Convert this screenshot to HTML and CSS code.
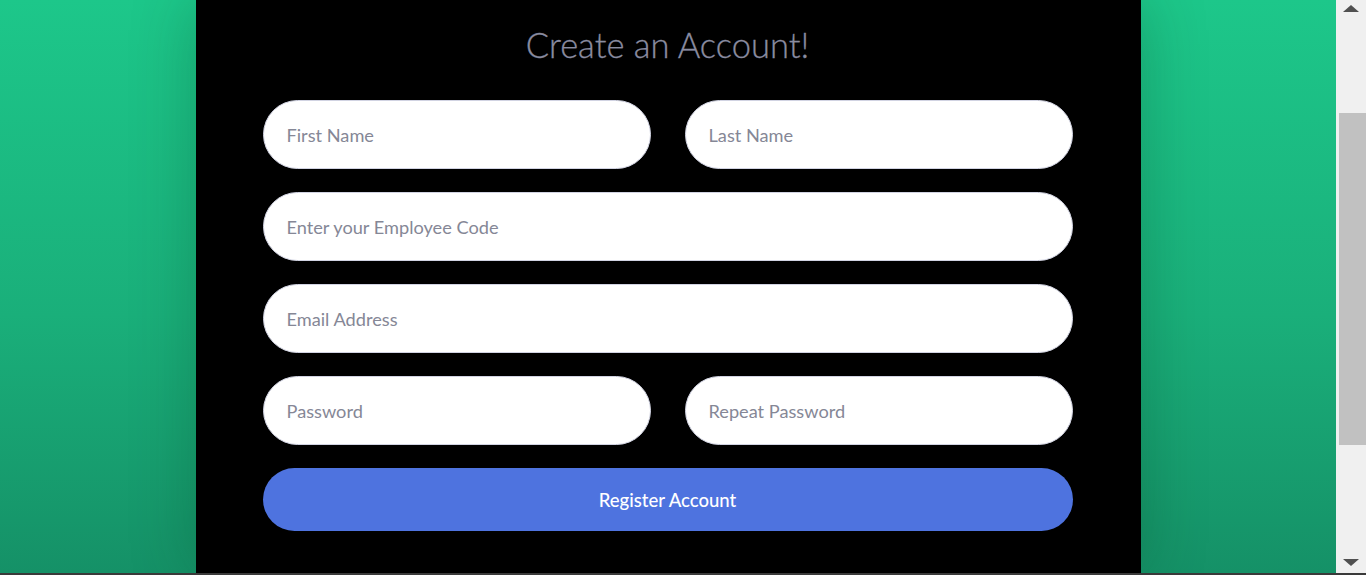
FILE: index.html
```html
<!DOCTYPE html>
<html lang="en">
<head>
<meta charset="utf-8">
<title>Register</title>
<link rel="stylesheet" href="styles.css">
</head>
<body>
<div class="screen">
  <main class="page">
    <section class="card">
      <h1 class="title">Create an Account!</h1>
      <form class="form">
        <div class="row two">
          <input class="field" type="text" placeholder="First Name">
          <input class="field" type="text" placeholder="Last Name">
        </div>
        <div class="row">
          <input class="field" type="text" placeholder="Enter your Employee Code">
        </div>
        <div class="row">
          <input class="field" type="email" placeholder="Email Address">
        </div>
        <div class="row two">
          <input class="field" type="password" placeholder="Password">
          <input class="field" type="password" placeholder="Repeat Password">
        </div>
        <button class="btn" type="button">Register Account</button>
      </form>
    </section>
  </main>
  <div class="scrollbar">
    <div class="arrow up"></div>
    <div class="track"><div class="thumb"></div></div>
    <div class="arrow down"></div>
  </div>
</div>
<div class="bottom-line"></div>
</body>
</html>
```
FILE: styles.css
```css
html, body {
  margin: 0;
  padding: 0;
  height: 575px;
  overflow: hidden;
}
body {
  display: flex;
  flex-direction: column;
  font-family: Lato, "Noto Sans", sans-serif;
}
.screen {
  flex: 1;
  display: flex;
  min-height: 0;
}
.page {
  flex: 1;
  display: flex;
  justify-content: center;
  background: linear-gradient(180deg, #1dc78a 0%, #1aaf7a 55%, #159167 100%);
}
.card {
  width: 945px;
  box-sizing: border-box;
  background: #000;
  padding: 26px 68px 0 67px;
  box-shadow: 0 0 60px rgba(0, 60, 30, 0.28);
}
.title {
  margin: 0 0 36px;
  text-align: center;
  font-weight: 300;
  font-size: 34.5px;
  line-height: 38px;
  color: #8a8ca0;
  -webkit-text-stroke: 0.3px #8a8ca0;
}
.form {
  display: flex;
  flex-direction: column;
  gap: 23px;
}
.row {
  display: flex;
}
.row.two {
  gap: 34px;
}
.field {
  flex: 1;
  min-width: 0;
  height: 69px;
  box-sizing: border-box;
  border: 1px solid #d1d3e2;
  border-radius: 40px;
  background: #fff;
  padding: 0 23px;
  font-family: inherit;
  font-size: 18.2px;
  color: #6e707e;
  outline: none;
}
.field::placeholder {
  color: #858796;
}
.btn {
  height: 63px;
  border: none;
  border-radius: 40px;
  background: #4e73df;
  color: #fff;
  font-family: inherit;
  font-size: 18.5px;
  font-weight: 500;
}
.scrollbar {
  width: 30px;
  background: #f0f0f0;
  display: flex;
  flex-direction: column;
  align-items: center;
}
.track {
  flex: 1;
  width: 100%;
  padding-top: 101px;
  box-sizing: border-box;
  display: flex;
  justify-content: flex-end;
}
.thumb {
  width: 27px;
  height: 332px;
  background: #c1c1c1;
}
.arrow {
  width: 0;
  height: 0;
  border-left: 8px solid transparent;
  border-right: 8px solid transparent;
}
.arrow.up {
  margin-top: 5px;
  border-bottom: 7px solid #505050;
}
.arrow.down {
  margin-bottom: 7px;
  border-top: 7px solid #505050;
}
.bottom-line {
  height: 2px;
  background: #3a3a3a;
}
```
